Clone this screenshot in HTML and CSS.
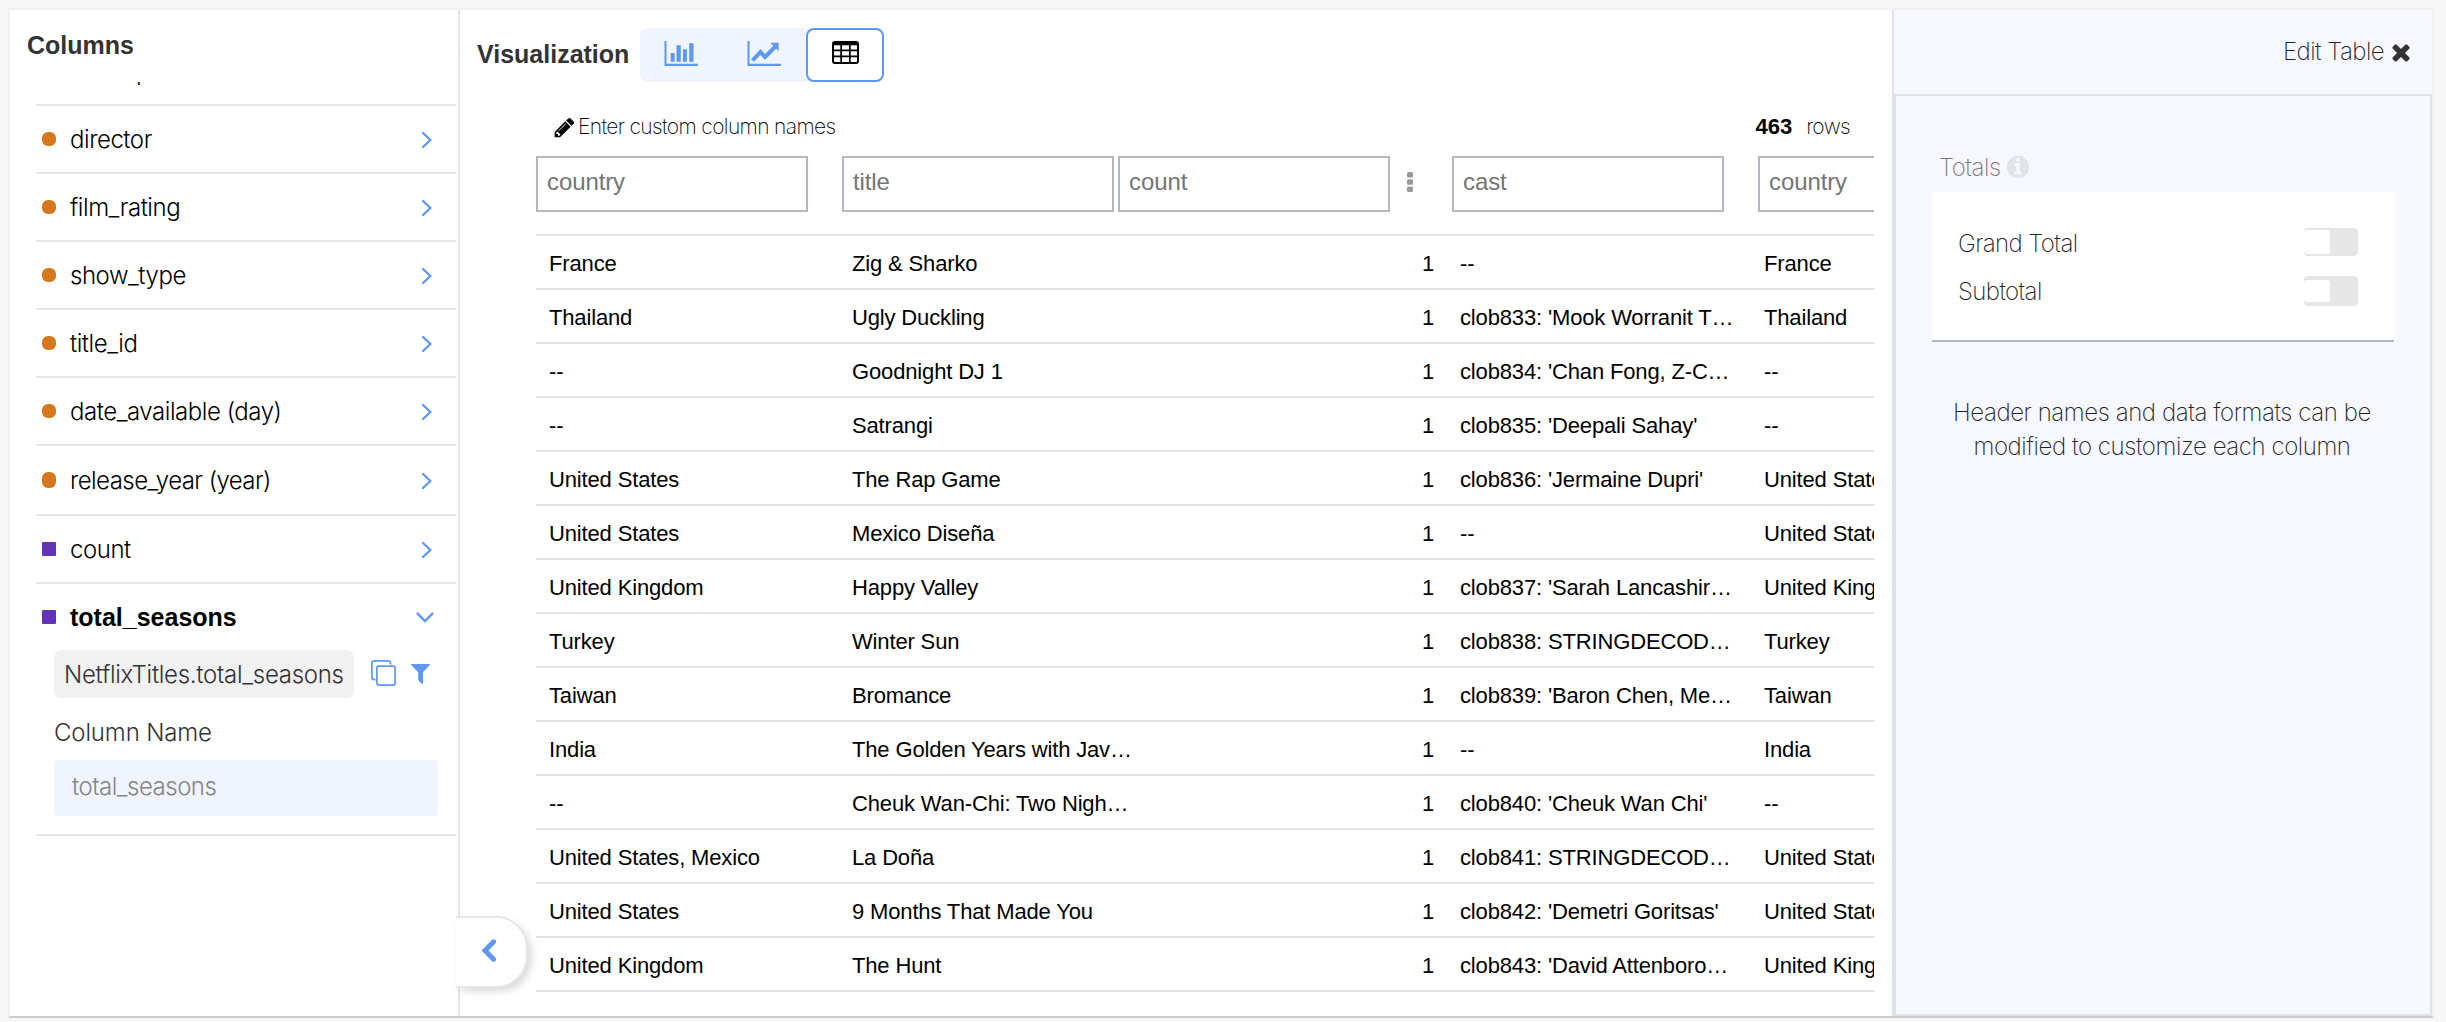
FILE: index.html
```html
<!DOCTYPE html>
<html lang="en">
<head>
<meta charset="utf-8">
<title>Visualization</title>
<link rel="stylesheet" href="styles.css">
</head>
<body>
<svg class="defs" width="0" height="0">
  <symbol id="next" viewBox="0 0 12 18"><path d="M2 2l7.4 7L2 16" fill="none" stroke="#5e98f0" stroke-width="2.4" stroke-linecap="round" stroke-linejoin="round"/></symbol>
  <symbol id="dots" viewBox="0 0 6 20"><path d="M1.5 0h3q1.500 0 1.500 1.500v2.500q0 1.500-1.500 1.500h-3q-1.500 0-1.500-1.500v-2.500q0-1.500 1.500-1.500zM1.500 7.250h3q1.500 0 1.500 1.500v2.500q0 1.500-1.500 1.500h-3q-1.500 0-1.500-1.500v-2.500q0-1.500 1.500-1.500zM1.500 14.500h3q1.500 0 1.500 1.500v2.500q0 1.500-1.500 1.500h-3q-1.500 0-1.500-1.500v-2.500q0-1.500 1.500-1.500z" fill="#999"/></symbol>
</svg>
<div class="panel">
  <aside class="columns">
    <h2 class="columns-title">Columns</h2>
    <div class="scroller">
      <ul class="list">
        <li class="item"><i class="dot"></i><span class="name">description</span><svg class="next"><use href="#next"/></svg></li>
        <li class="item"><i class="dot"></i><span class="name">director</span><svg class="next"><use href="#next"/></svg></li>
        <li class="item"><i class="dot"></i><span class="name">film_rating</span><svg class="next"><use href="#next"/></svg></li>
        <li class="item"><i class="dot"></i><span class="name">show_type</span><svg class="next"><use href="#next"/></svg></li>
        <li class="item"><i class="dot"></i><span class="name">title_id</span><svg class="next"><use href="#next"/></svg></li>
        <li class="item"><i class="dot"></i><span class="name">date_available (day)</span><svg class="next"><use href="#next"/></svg></li>
        <li class="item tall"><i class="dot"></i><span class="name">release_year (year)</span><svg class="next"><use href="#next"/></svg></li>
        <li class="item"><i class="dot square"></i><span class="name">count</span><svg class="next"><use href="#next"/></svg></li>
        <li class="open">
          <div class="open-head"><i class="dot square"></i><span class="name strong">total_seasons</span>
            <svg class="down" viewBox="0 0 18 11"><path d="M1.600 1.600L9 9.200l7.400-7.600" fill="none" stroke="#5e98f0" stroke-width="2.400" stroke-linecap="round" stroke-linejoin="round"/></svg>
          </div>
          <div class="field">
            <span class="chip">NetflixTitles.total_seasons</span>
            <svg class="copy" viewBox="0 0 25 26" fill="none" stroke="#5e98f0" stroke-width="1.700"><path d="M4.500 19.600H3.200Q.900 19.600.900 17.300V3Q.900.900 3.200.900h14q2.300 0 2.300 2.300v1.400"/><rect x="5.900" y="6.200" width="18.200" height="18.900" rx="2"/></svg>
            <svg class="funnel" viewBox="0 0 19 20"><path d="M.400 0h18.200q.600.500.200 1L12 8.300v10.900q-.300.900-1.200.500l-2.900-2.600q-.700-.6-.7-1.500V8.300L.200 1q-.400-.500.200-1z" fill="#5e98f0"/></svg>
          </div>
          <div class="label">Column Name</div>
          <div class="name-input">total_seasons</div>
        </li>
      </ul>
    </div>
  </aside>

  <main class="viz">
    <header class="viz-head">
      <h2 class="viz-title">Visualization</h2>
      <div class="types">
        <span class="type"><svg width="34" height="25" viewBox="0 0 34 25"><path d="M.500 0h2v22.700H34V25H.500z" fill="#5e98f0"/><path d="M6.700 12h4v8.700h-4zM12.500 4.300h4.300v16.400h-4.300zM18.900 8.300h4v12.400h-4zM25.200 2.300h4.300v18.400h-4.300z" fill="#5e98f0"/></svg></span>
        <span class="type"><svg width="34" height="25" viewBox="0 0 34 25"><path d="M.500 0h2v22.700H34V25H.500z" fill="#5e98f0"/><path d="M5.500 19.500l8-8.500 4.500 5L29 5" fill="none" stroke="#5e98f0" stroke-width="4"/><path d="M23.300 1.700H31q.600 0 .600.600V10z" fill="#5e98f0"/></svg></span>
        <span class="type active"><svg width="27" height="23" viewBox="0 0 27 23"><path fill-rule="evenodd" d="M3 0h21q3 0 3 3v17q0 3-3 3H3q-3 0-3-3V3q0-3 3-3zM2 4.300v4.200h6.300V4.300zM10 4.300v4.200h7V4.300zM18.700 4.300v4.200H25V4.300zM2 10.300v4.200h6.300v-4.200zM10 10.300v4.200h7v-4.200zM18.700 10.300v4.200H25v-4.200zM2 16.300V20q0 1 1 1h5.300v-4.700zM10 16.300V21h7v-4.700zM18.700 16.300V21H24q1 0 1-1v-3.700z"/></svg></span>
      </div>
    </header>
    <div class="meta">
      <svg class="pencil" viewBox="0 0 1792 1792"><path d="M491 1536l91-91-235-235-91 91v107h128v128h107zm523-928q0-22-22-22-10 0-17 7l-542 542q-7 7-7 17 0 22 22 22 10 0 17-7l542-542q7-7 7-17zm-54-192l416 416-832 832h-416v-416zm683 96q0 53-37 90l-166 166-416-416 166-165q36-38 90-38 53 0 91 38l235 234q37 39 37 91z"/></svg>
      <span class="hint">Enter custom column names</span>
      <b class="total">463</b><span class="rows">rows</span>
    </div>
    <div class="grid">
      <div class="inputs">
        <div class="input">country</div>
        <div class="input">title</div>
        <div class="pair"><div class="input">count</div><svg class="dots"><use href="#dots"/></svg></div>
        <div class="input">cast</div>
        <div class="input">country</div>
      </div>
      <div class="row"><span>France</span><span>Zig &amp; Sharko</span><span>1</span><span>--</span><span>France</span></div>
      <div class="row"><span>Thailand</span><span>Ugly Duckling</span><span>1</span><span>clob833: 'Mook Worranit T…</span><span>Thailand</span></div>
      <div class="row"><span>--</span><span>Goodnight DJ 1</span><span>1</span><span>clob834: 'Chan Fong, Z-C…</span><span>--</span></div>
      <div class="row"><span>--</span><span>Satrangi</span><span>1</span><span>clob835: 'Deepali Sahay'</span><span>--</span></div>
      <div class="row"><span>United States</span><span>The Rap Game</span><span>1</span><span>clob836: 'Jermaine Dupri'</span><span>United States</span></div>
      <div class="row"><span>United States</span><span>Mexico Diseña</span><span>1</span><span>--</span><span>United States</span></div>
      <div class="row"><span>United Kingdom</span><span>Happy Valley</span><span>1</span><span>clob837: 'Sarah Lancashir…</span><span>United Kingdom</span></div>
      <div class="row"><span>Turkey</span><span>Winter Sun</span><span>1</span><span>clob838: STRINGDECOD…</span><span>Turkey</span></div>
      <div class="row"><span>Taiwan</span><span>Bromance</span><span>1</span><span>clob839: 'Baron Chen, Me…</span><span>Taiwan</span></div>
      <div class="row"><span>India</span><span>The Golden Years with Jav…</span><span>1</span><span>--</span><span>India</span></div>
      <div class="row"><span>--</span><span>Cheuk Wan-Chi: Two Nigh…</span><span>1</span><span>clob840: 'Cheuk Wan Chi'</span><span>--</span></div>
      <div class="row"><span>United States, Mexico</span><span>La Doña</span><span>1</span><span>clob841: STRINGDECOD…</span><span>United States, Mexico</span></div>
      <div class="row"><span>United States</span><span>9 Months That Made You</span><span>1</span><span>clob842: 'Demetri Goritsas'</span><span>United States</span></div>
      <div class="row"><span>United Kingdom</span><span>The Hunt</span><span>1</span><span>clob843: 'David Attenboro…</span><span>United Kingdom</span></div>
    </div>
    <div class="collapse"><svg width="16" height="23" viewBox="0 0 16 23"><path d="M12.600 2.800L4 11.500l8.600 8.700" fill="none" stroke="#5e98f0" stroke-width="5" stroke-linecap="round"/></svg></div>
  </main>

  <aside class="edit">
    <div class="edit-head"><span>Edit Table</span>
      <svg class="close" viewBox="0 0 1792 1792"><path fill="#333" d="M1490 1322q0 40-28 68l-136 136q-28 28-68 28t-68-28l-294-294-294 294q-28 28-68 28t-68-28l-136-136q-28-28-28-68t28-68l294-294-294-294q-28-28-28-68t28-68l136-136q28-28 68-28t68 28l294 294 294-294q28-28 68-28t68 28l136 136q28 28 28 68t-28 68l-294 294 294 294q28 28 28 68z"/></svg>
    </div>
    <div class="edit-body">
      <div class="totals"><span>Totals</span>
        <svg class="info" viewBox="0 0 1792 1792"><path fill="#e0e3e8" d="M1152 1376v-160q0-14-9-23t-23-9h-96v-512q0-14-9-23t-23-9h-320q-14 0-23 9t-9 23v160q0 14 9 23t23 9h96v320h-96q-14 0-23 9t-9 23v160q0 14 9 23t23 9h448q14 0 23-9t9-23zm-128-896v-160q0-14-9-23t-23-9h-192q-14 0-23 9t-9 23v160q0 14 9 23t23 9h192q14 0 23-9t9-23zm640 416q0 209-103 385.500t-279.500 279.500-385.500 103-385.500-103-279.500-279.500-103-385.500 103-385.500 279.500-279.500 385.500-103 385.500 103 279.500 279.500 103 385.500z"/></svg>
      </div>
      <div class="card">
        <div class="option"><span>Grand Total</span><i class="toggle"></i></div>
        <div class="option"><span>Subtotal</span><i class="toggle low"></i></div>
      </div>
      <p class="note">Header names and data formats can be<br>modified to customize each column</p>
    </div>
  </aside>
</div>
</body>
</html>
```
FILE: styles.css
```css
* { box-sizing: border-box; }
body {
  margin: 0;
  width: 2446px;
  height: 1022px;
  padding: 8px 12px 4px 8px;
  background: #f7f7f7;
  font-family: "Liberation Sans", Arial, sans-serif;
  overflow: hidden;
}
.defs { position: absolute; }
svg { display: block; flex: none; }
h2 { margin: 0; font-size: 25px; color: #333; line-height: 30px; }
.panel {
  display: flex;
  width: 2426px;
  height: 1010px;
  border: 2px solid #f0f0f0;
  border-bottom-color: #ccc;
  background: #fff;
}

/* column list */
.columns {
  width: 450px;
  flex: none;
  border-right: 2px solid #e5e5e5;
  display: flex;
  flex-direction: column;
}
.columns-title { padding: 20px 0 0 17px; height: 72px; }
.scroller { flex: 1; overflow: hidden; padding: 0 2px 0 26px; }
.list { list-style: none; margin: -44px 0 0; padding: 0; }
.item, .open-head {
  display: flex;
  align-items: center;
  height: 68px;
  padding: 0 23px 0 6px;
  border-bottom: 2px solid #e6e6e6;
}
.item.tall { height: 70px; }
.dot { width: 14px; height: 14px; border-radius: 6px; background: #d6771e; margin-right: 14px; flex: none; }
.tall .dot { height: 16px; }
.dot.square { border-radius: 1px; background: #6233b8; }
.name {
  flex: 1;
  padding-top: 1px;
  font: 300 24px/30px Inter, sans-serif;
  letter-spacing: -0.45px;
  color: #000;
  white-space: nowrap;
}
.tall .name { letter-spacing: -0.55px; }
.name.strong { padding: 0 0 1px; font: bold 25px/30px "Liberation Sans", sans-serif; letter-spacing: 0; }
.next { width: 12px; height: 18px; margin-top: 2px; }
.open { height: 252px; border-bottom: 2px solid #e6e6e6; }
.open-head { height: 66px; border: 0; padding-right: 22px; }
.down { width: 18px; height: 11px; }
.field { display: flex; align-items: center; padding-left: 18px; height: 48px; }
.chip {
  width: 300px;
  height: 48px;
  border-radius: 7px;
  background: #f1f1f1;
  padding-left: 10px;
  font: 300 24px/50px Inter, sans-serif;
  letter-spacing: -0.27px;
  color: #333;
  white-space: nowrap;
}
.copy { width: 25px; height: 26px; margin: -3px 15px 0 17px; }
.funnel { width: 19px; height: 20px; }
.label {
  padding: 20px 0 0 18px;
  height: 62px;
  font: 300 24px/30px Inter, sans-serif;
  letter-spacing: -0.15px;
  color: #333;
}
.name-input {
  margin-left: 18px;
  width: 384px;
  height: 56px;
  border-radius: 4px;
  background: #f0f4fd;
  padding-left: 18px;
  font: 300 24px/54px Inter, sans-serif;
  letter-spacing: -0.5px;
  color: #858585;
}

/* visualization */
.viz { position: relative; width: 1432px; flex: none; }
.viz-head { display: flex; align-items: center; height: 90px; padding-left: 17px; }
.viz-title { width: 163px; padding-bottom: 3px; }
.types { display: flex; height: 54px; border-radius: 8px; background: #f0f4fd; }
.type { display: flex; justify-content: center; width: 83px; padding-top: 13px; }
.type:first-child { padding-left: 0; width: 82px; }
.type:nth-child(2) { width: 84px; }
.type.active { width: 78px; padding-top: 11px; border: 2px solid #5e98f0; border-radius: 8px; background: #fff; }
.meta { display: flex; align-items: center; height: 56px; padding: 0 42px 2px 92px; }
.pencil { width: 23px; height: 23px; margin-left: 1px; }
.hint, .rows { font: 200 21px/30px Inter, sans-serif; letter-spacing: -0.65px; color: #000; }
.hint { flex: 1; margin-left: 2px; }
.total { font-size: 22px; line-height: 30px; margin-right: 14px; }
.grid { width: 1338px; margin-left: 76px; overflow: hidden; }
.inputs {
  display: grid;
  grid-template-columns: 306px 276px 334px 306px 306px;
  height: 80px;
  align-items: start;
  border-bottom: 2px solid #dfe3e8;
}
.input {
  width: 272px;
  height: 56px;
  border: 2px solid #b3b8bf;
  padding-left: 9px;
  font-size: 24px;
  line-height: 47px;
  letter-spacing: -0.1px;
  color: #757575;
}
.pair { display: flex; align-items: center; }
.dots { width: 6px; height: 20px; margin: -4px 0 0 17px; }
.row {
  display: grid;
  grid-template-columns: 306px 276px 334px 306px 306px;
  height: 54px;
  border-bottom: 2px solid #dfe3e8;
  font-size: 22px;
  line-height: 56px;
  letter-spacing: -0.15px;
  color: #000;
  white-space: nowrap;
}
.row span { height: 52px; }
.row span:nth-child(1) { padding-left: 13px; }
.row span:nth-child(2) { padding-left: 10px; }
.row span:nth-child(3) { padding-right: 18px; text-align: right; }
.row span:nth-child(4) { padding-left: 8px; }
.row span:nth-child(5) { padding-left: 6px; }
.collapse {
  position: absolute;
  left: -4px;
  top: 906px;
  width: 72px;
  height: 72px;
  padding: 21px 0 0 25px;
  border: 2px solid #e6e6e6;
  border-left: 0;
  border-radius: 0 32px 32px 0;
  background: #fff;
  box-shadow: 4px 4px 8px -1px rgba(0, 0, 0, .16);
}

/* edit panel */
.edit {
  width: 540px;
  flex: none;
  border-left: 2px solid #dfe2e8;
  background: #f7f8fd;
  font: 200 24px/34px Inter, sans-serif;
  letter-spacing: -0.42px;
  color: #222;
  display: flex;
  flex-direction: column;
}
.edit-head { display: flex; align-items: center; justify-content: flex-end; height: 84px; padding: 0 18px 0 0; }
.edit-head span { margin-top: -1px; letter-spacing: -0.55px; }
.close { width: 26px; height: 26px; margin: 0 0 0 4px; }
.edit-body { flex: 1; border: 2px solid #dfe2e8; padding: 0 36px; }
.totals { display: flex; align-items: center; height: 96px; padding: 46px 0 0 7px; color: #777; }
.totals span { line-height: 34px; margin-top: 2px; }
.info { width: 26px; height: 26px; margin: -1px 0 0 4px; }
.card { height: 150px; padding: 36px 36px 0 26px; background: #fff; border-bottom: 2px solid #b3b8c0; }
.option { display: flex; justify-content: space-between; height: 48px; }
.option span { padding: 0; line-height: 31px; letter-spacing: -0.6px; }
.toggle { width: 54px; height: 28px; border-radius: 4px; background: #e6e6e6; padding: 2px 0 0; }
.toggle::before { content: ""; display: block; width: 26px; height: 24px; border-radius: 3px; background: #fff; }
.toggle.low { height: 30px; padding-top: 4px; }
.toggle.low::before { height: 22px; }
.note { margin: 54px 0 0 -2px; text-align: center; }
```
